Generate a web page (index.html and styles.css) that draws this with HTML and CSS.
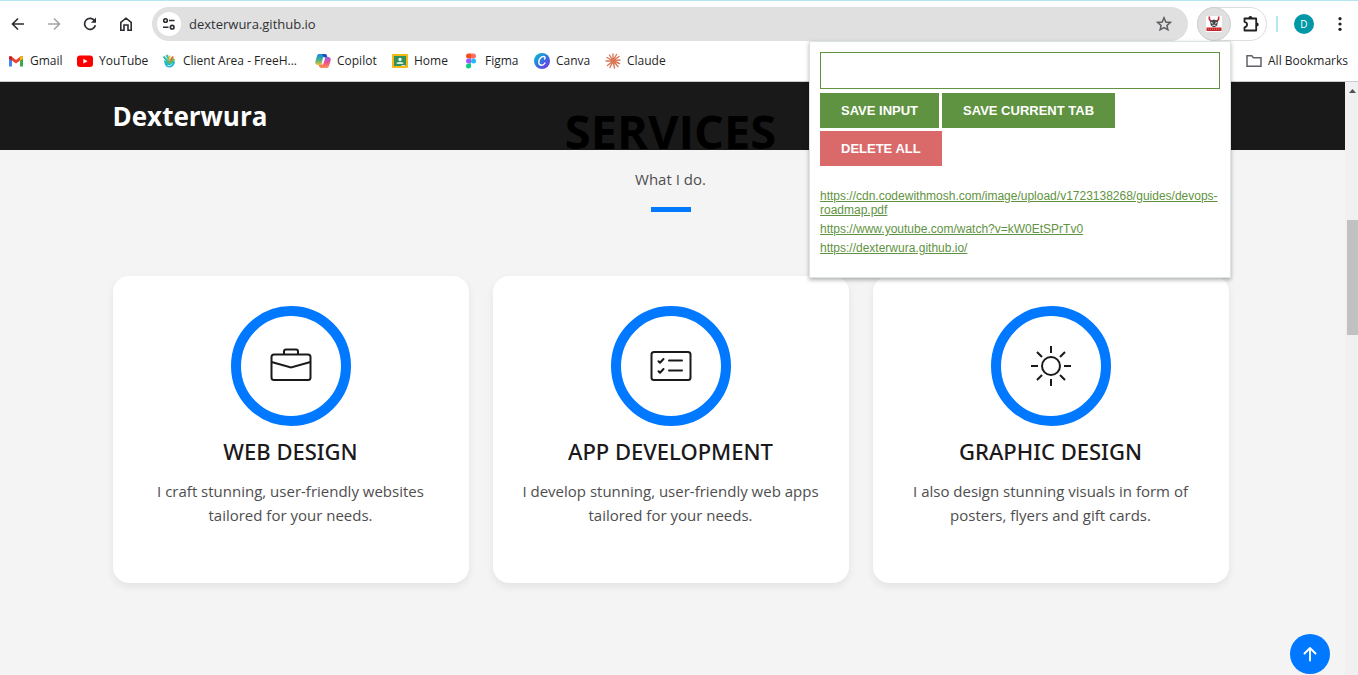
FILE: index.html
```html
<!DOCTYPE html>
<html lang="en">
<head>
<meta charset="utf-8">
<meta name="viewport" content="width=device-width, initial-scale=1">
<title>Dexterwura</title>
<link rel="stylesheet" href="styles.css">
</head>
<body>
<div class="browser">
  <header class="chrome">
    <div class="toolbar">
      <nav class="nav-buttons" aria-label="Navigation">
        <button class="icon-btn" type="button" aria-label="Back"><svg width="16" height="16" viewBox="0 0 16 16" fill="none" stroke="#2a2c30" stroke-width="1.6"><path d="M14 8H3M8 2.5 2.5 8 8 13.5"/></svg></button>
        <button class="icon-btn" type="button" aria-label="Forward"><svg width="16" height="16" viewBox="0 0 16 16" fill="none" stroke="#a5a5a5" stroke-width="1.6"><path d="M2 8h11M8 2.5 13.5 8 8 13.5"/></svg></button>
        <button class="icon-btn" type="button" aria-label="Reload"><svg width="16" height="16" viewBox="0 0 16 16" fill="none" stroke="#2a2c30" stroke-width="1.7"><path d="M12.8 5A5.5 5.5 0 1 0 13.4 9.3"/><path d="M14 1.5v5.2H9z" fill="#2a2c30" stroke="none"/></svg></button>
        <button class="icon-btn" type="button" aria-label="Home"><svg width="16" height="16" viewBox="0 0 16 16" fill="none" stroke="#2a2c30" stroke-width="1.6"><path d="M2.8 14.2V6.3L8 2.2l5.200 4.100v7.900H10V9H6v5.200z"/></svg></button>
      </nav>
      <div class="omnibox">
        <button class="site-info" type="button" aria-label="View site information"><svg width="16" height="16" viewBox="0 0 16 16" fill="none" stroke="#2a2c30" stroke-width="1.6"><circle cx="4.5" cy="4.5" r="1.8"/><path d="M8 4.5h5.5M2 11.2h5.5"/><circle cx="11.2" cy="11.2" r="1.8"/></svg></button>
        <input class="address" type="text" value="dexterwura.github.io" aria-label="Address">
        <button class="star" type="button" aria-label="Bookmark this tab"><svg width="16" height="16" viewBox="0 0 16 16" fill="none" stroke="#5c5f62" stroke-width="1.5"><path d="M8 1.8 9.8 6l4.5.4-3.4 3 1 4.4L8 11.5l-3.9 2.3 1-4.4-3.4-3L6.200 6z"/></svg></button>
      </div>
      <div class="extensions">
        <button class="ext-active" type="button" aria-label="Leads tracker"><svg width="16" height="16" viewBox="0 0 16 16"><path fill="#fff" d="M0 0h16v16H0z"/><path d="M3.500.5c-.8 2.500 0 4 2.500 5M12.500.5c.8 2.500 0 4-2.500 5" fill="none" stroke="#c42d32" stroke-width="1.600"/><path d="M4 5 8 3.500 12 5l-.8 4.500L8 11.500 4.800 9.500z" fill="#45464a"/><path d="m5 6.500 2 .8M11 6.500l-2 .8M6.500 9.300h3" stroke="#eee"/><path d="M.5 11.500h15V15H.5z" fill="#c5262b"/><path d="M2 13.200h12" stroke="#e67979" stroke-dasharray="1 1"/></svg></button>
        <button class="ext-menu" type="button" aria-label="Extensions"><svg width="18" height="18" viewBox="0 0 18 18" fill="none" stroke="#202124" stroke-width="1.800"><path d="M2.500 3.500h11.700v12H2.500v-3.200c3.400-.5 3.400-4.900 0-5.400z" stroke-linejoin="round"/><path d="M6.400 3a2 2 0 0 1 4 0zM14.700 7.500a2 2 0 0 1 0 4z" fill="#202124" stroke="none"/></svg></button>
      </div>
      <span class="divider"></span>
      <button class="avatar" type="button" aria-label="Profile">D</button>
      <button class="icon-btn" type="button" aria-label="Menu"><svg width="16" height="16" viewBox="0 0 16 16" fill="#202124"><circle cx="8" cy="2.700" r="1.600"/><circle cx="8" cy="8" r="1.600"/><circle cx="8" cy="13.300" r="1.600"/></svg></button>
    </div>
    <nav class="bookmarks" aria-label="Bookmarks">
      <a class="bookmark gmail" href="#"><svg width="16" height="16" viewBox="0 0 16 16"><path fill="#4285f4" d="M1 4v9.500h3V7.200z"/><path fill="#34a853" d="M15 4v9.500h-3V7.200z"/><path fill="#ea4335" d="M1 3.500 3 3l5 4 5-4 2 .5v2L8 10.500 1 5.500z"/><path fill="#c5221f" d="M1 4.500 2 3l2 1v3.700L1 5.700z"/><path fill="#fbbc04" d="M15 4.500 14 3l-2 1v3.700l3-2z"/></svg>Gmail</a>
      <a class="bookmark youtube" href="#"><svg width="16" height="16" viewBox="0 0 16 16"><rect y="2.500" width="16" height="11.500" rx="3" fill="#f00"/><path d="m6.300 5.800 4.300 2.400-4.300 2.400z" fill="#fff"/></svg>YouTube</a>
      <a class="bookmark client" href="#"><svg width="16" height="16" viewBox="0 0 16 16"><path d="M3 7c1 1 3 1 4 1l5-2 2 3c-.5 3.500-3 5.500-6 5.500S3 11 3 7z" fill="#22b8d6"/><path d="m2.500 3.500 4.500 5M5.500 2 8.500 7" stroke="#36bfae" stroke-width="2.200"/><path d="M8.500 2.500v5" stroke="#f2c13c" stroke-width="1.800"/><path d="m12 3.500-2.500 4.500" stroke="#e06d36" stroke-width="2"/><path d="m13.500 6-4.500 4-3-2" fill="none" stroke="#76b747" stroke-width="2"/><path d="M6.500 12.500c3 .5 4-.5 4.500-2" fill="none" stroke="#c3edf6"/></svg>Client Area - FreeH...</a>
      <a class="bookmark copilot" href="#"><svg width="16" height="16" viewBox="0 0 16 16"><defs><linearGradient id="ca" x2="0" y2="1"><stop stop-color="#168be5"/><stop offset=".5" stop-color="#3bae91"/><stop offset="1" stop-color="#eec425"/></linearGradient><linearGradient id="cb" x2="0" y2="1"><stop stop-color="#9b5ae8"/><stop offset=".5" stop-color="#ec528d"/><stop offset="1" stop-color="#ff934c"/></linearGradient></defs><path d="M4 1h6c1 0 1.500.7 2 2l.4 1H10L7 11c-.3.700-1 1-2 1H3C.8 12-.2 10.500.4 8.500L2 3c.3-1.200 1-2 2-2z" fill="url(#ca)"/><path d="M7 1h3c1.300 0 1.600 1 2.200 3H9.500C8 4 8 2 7 1z" fill="#174ec0"/><path d="M12 15H6c-1 0-1.500-.7-2-2l-.3-1H6l3-7c.3-.700 1-1 2-1h2c2.200 0 3.200 1.500 2.600 3.500L14 13c-.3 1.200-1 2-2 2z" fill="url(#cb)"/><path d="m8.500 4.500-1.500 6.700h.7L9.700 5z" fill="#fff" stroke="#fff"/></svg>Copilot</a>
      <a class="bookmark home" href="#"><svg width="16" height="16" viewBox="0 0 16 16"><rect y="1" width="16" height="14" rx="1" fill="#f5b916"/><path d="M2 3h12v10H2z" fill="#31915a"/><circle cx="8" cy="6.300" r="1.600" fill="#fff"/><path d="M4.500 11c0-3 7-3 7 0z" fill="#d6eadb"/><path d="M9.500 12h4v1h-4z" fill="#ddd"/></svg>Home</a>
      <a class="bookmark figma" href="#"><svg width="16" height="16" viewBox="0 0 16 16"><path d="M8 .5H5.500a2.500 2.500 0 0 0 0 5H8z" fill="#f24e1e"/><path d="M8 .5h2.500a2.500 2.500 0 0 1 0 5H8z" fill="#ff7262"/><path d="M8 5.500H5.500a2.500 2.500 0 0 0 0 5H8z" fill="#a259ff"/><circle cx="10.500" cy="8" r="2.500" fill="#1abcfe"/><path d="M8 10.500H5.500A2.500 2.500 0 1 0 8 13z" fill="#0acf83"/></svg>Figma</a>
      <a class="bookmark canva" href="#"><svg width="16" height="16" viewBox="0 0 16 16"><defs><linearGradient id="cv" x2="1" y2="1"><stop stop-color="#05c7cf"/><stop offset=".5" stop-color="#3372df"/><stop offset="1" stop-color="#8528e8"/></linearGradient></defs><circle cx="8" cy="8" r="8" fill="url(#cv)"/><path d="M10.500 6c1.200-1.200.5-2.500-1-2.500-2.500 0-4.700 2.700-4.700 5.600C4.800 13 9 13.200 11 10" fill="none" stroke="#fff" stroke-width="1.400" stroke-linecap="round"/></svg>Canva</a>
      <a class="bookmark" href="#"><svg width="16" height="16" viewBox="0 0 16 16" stroke="#d97757" stroke-width="1.400" stroke-linecap="round"><path d="M8 8V1M8 8l3.500-6.500M8 8l6-4.500M8 8l7-1M8 8l6.500 2.500M8 8l5 5.500M8 8l1.500 7M8 8l-3 6.500M8 8l-5.500 4.500M8 8H1M8 8 2 4.500M8 8 4.500 2"/></svg>Claude</a>
      <a class="bookmark all" href="#"><svg width="16" height="16" viewBox="0 0 16 16" fill="none" stroke="#5f6368" stroke-width="1.500"><path d="M1 2.700h4.800l1.600 2H15v8.600H1z"/></svg>All Bookmarks</a>
    </nav>
  </header>

  <section class="popup" aria-label="Leads tracker">
    <input class="lead-input" type="text" aria-label="Lead">
    <div class="popup-actions">
      <button class="action" type="button">SAVE INPUT</button>
      <button class="action" type="button">SAVE CURRENT TAB</button>
      <button class="action danger" type="button">DELETE ALL</button>
    </div>
    <ul class="leads">
      <li><a href="#">https://cdn.codewithmosh.com/image/upload/v1723138268/guides/devops-roadmap.pdf</a></li>
      <li><a href="#">https://www.youtube.com/watch?v=kW0EtSPrTv0</a></li>
      <li><a href="#">https://dexterwura.github.io/</a></li>
    </ul>
  </section>

  <div class="viewport">
    <div class="site">
      <header class="site-header"><div class="container"><a class="brand" href="#">Dexterwura</a></div></header>
      <main class="container services">
        <h1 class="heading">SERVICES</h1>
        <p class="subtitle">What I do.</p>
        <span class="rule"></span>
        <div class="cards">
          <article class="card">
            <div class="ring"><svg width="42" height="42" viewBox="0 0 42 42" fill="none" stroke="#1b191c" stroke-width="2"><rect x="1.500" y="9.500" width="39" height="25.500" rx="2.500"/><path d="M14 9.500v-3a2 2 0 0 1 2-2h10a2 2 0 0 1 2 2v3M1.500 17 21 22.500 40.500 17"/></svg></div>
            <h2 class="card-title">WEB DESIGN</h2>
            <p class="card-text">I craft stunning, user-friendly websites tailored for your needs.</p>
          </article>
          <article class="card">
            <div class="ring"><svg width="42" height="42" viewBox="0 0 42 42" fill="none" stroke="#1b191c" stroke-width="2" stroke-linecap="round" stroke-linejoin="round"><rect x="1.500" y="7" width="39" height="28" rx="2.500"/><path d="M19 15.500h13M19 25.500h13M8.500 16.200l1.500 1.500 3.500-3.700M8.500 26.200l1.500 1.500 3.500-3.700"/></svg></div>
            <h2 class="card-title">APP DEVELOPMENT</h2>
            <p class="card-text">I develop stunning, user-friendly web apps tailored for your needs.</p>
          </article>
          <article class="card">
            <div class="ring"><svg width="42" height="42" viewBox="0 0 42 42" fill="none" stroke="#1b191c" stroke-width="2"><circle cx="21" cy="21" r="9"/><path d="M21 1v7M21 34v7M1 21h7M34 21h7M7 7l5 5M30 30l5 5M7 35l5-5M30 12l5-5"/></svg></div>
            <h2 class="card-title">GRAPHIC DESIGN</h2>
            <p class="card-text">I also design stunning visuals in form of posters, flyers and gift cards.</p>
          </article>
        </div>
      </main>
      <button class="to-top" type="button" aria-label="Back to top"><svg width="16" height="16" viewBox="0 0 16 16" fill="none" stroke="#fff" stroke-width="1.900" stroke-linecap="round" stroke-linejoin="round"><path d="M8 14.500v-12M2.500 7.500 8 2l5.500 5.500"/></svg></button>
    </div>
    <div class="scrollbar"><svg width="7" height="4" viewBox="0 0 7 4"><path d="M0 4 3.500 0 7 4z" fill="#505050"/></svg><span class="thumb"></span></div>
  </div>
</div>
</body>
</html>
```
FILE: styles.css
```css
* { box-sizing: border-box; }

body {
  margin: 0;
  font-family: "Open Sans", "Noto Sans", sans-serif;
  color: #1b191c;
}

button { border: 0; padding: 0; background: none; font: inherit; }
a { color: inherit; text-decoration: none; }
svg { display: block; flex: none; }

.browser {
  position: relative;
  display: flex;
  flex-direction: column;
  min-height: 100vh;
}

/* Browser toolbar */
.chrome {
  height: 82px;
  border-top: 1px solid #b4e7f2;
  border-bottom: 1px solid #c9cccf;
  background: #fff;
}

.toolbar {
  display: flex;
  align-items: center;
  height: 46px;
  padding: 0 10px;
}

.nav-buttons { display: flex; gap: 20px; margin-right: 18px; }
.icon-btn { display: flex; }

.omnibox {
  display: flex;
  flex: 1;
  align-items: center;
  height: 34px;
  margin-right: 9px;
  padding: 0 16px 0 5px;
  border-radius: 17px;
  background: #e0e0e0;
}

.site-info {
  display: grid;
  place-items: center;
  width: 24px;
  height: 24px;
  border-radius: 50%;
  background: #fff;
}

.address {
  flex: 1;
  min-width: 0;
  padding: 0 8px;
  border: 0;
  background: none;
  color: #303236;
  font: 13px "Open Sans", sans-serif;
}

.extensions {
  display: flex;
  align-items: center;
  width: 70px;
  height: 34px;
  border: 1px solid #dedede;
  border-radius: 17px;
}

.ext-active {
  display: grid;
  place-items: center;
  width: 34px;
  height: 34px;
  margin: -1px 11px -1px -1px;
  border: 1px solid #cfcfcf;
  border-radius: 50%;
  background: #e0e0e0;
}

.divider { width: 2px; height: 16px; margin: 0 16px 0 9px; background: #b4e7f2; }

.avatar {
  width: 20px;
  height: 20px;
  margin-right: 18px;
  border-radius: 50%;
  background: #0097a7;
  color: #fff;
  font-size: 10px;
}

.bookmarks {
  display: flex;
  align-items: center;
  height: 27px;
  padding: 0 10px 0 8px;
  color: #1f1f1f;
  font-size: 12px;
}

.bookmark { display: flex; flex: none; align-items: center; gap: 6px; white-space: nowrap; }
.gmail { width: 69px; }
.youtube { width: 84px; }
.client { width: 154px; }
.copilot { width: 77px; }
.home { width: 71px; }
.figma { width: 71px; }
.canva { width: 71px; }
.all { margin-left: auto; }

/* Extension popup */
.popup {
  position: absolute;
  z-index: 3;
  top: 41px;
  right: 127px;
  width: 422px;
  padding: 10px 10px 22px;
  border: 1px solid #dce4e6;
  background: #fff;
  box-shadow: 0 2px 4px rgb(0 0 0 / 30%);
  font-family: "Liberation Sans", Arial, sans-serif;
}

.lead-input {
  display: block;
  width: 100%;
  height: 37px;
  margin-bottom: 4px;
  padding: 10px;
  border: 1px solid #5f9341;
}

.popup-actions { display: flex; flex-wrap: wrap; gap: 3px; }

.action {
  height: 35px;
  padding: 0 21px;
  background: #5f9341;
  color: #fff;
  font-size: 13px;
  font-weight: 700;
}

.danger { background: #da6969; }

.leads {
  display: grid;
  gap: 5px;
  margin: 23px 0 0;
  padding: 0;
  color: #5f9341;
  font-size: 12px;
  line-height: 14px;
  list-style: none;
}

.leads a { text-decoration: underline; }

/* Website */
.viewport { display: flex; flex: 1; }

.site {
  position: relative;
  flex: 1;
  padding-right: 4px;
  background: linear-gradient(#191919 68px, #f4f4f4 68px);
}

.container { width: calc(100% - 48px); max-width: 1116px; margin: 0 auto; }

.site-header {
  display: flex;
  align-items: center;
  height: 68px;
  padding-bottom: 1px;
}

.brand { color: #fff; font-size: 26px; font-weight: 700; }

.services {
  position: relative;
  display: flex;
  flex-direction: column;
  align-items: center;
  padding-bottom: 80px;
}

.heading {
  margin: -49px 0 0;
  color: #000;
  font-size: 47px;
  font-weight: 700;
  line-height: 60px;
}

.subtitle { margin: 6px 0 16px; color: #4e4e4e; font-size: 15px; line-height: 24px; }
.rule { width: 40px; height: 5px; background: #0078ff; }

.cards {
  display: grid;
  grid-template-columns: repeat(auto-fit, minmax(280px, 1fr));
  gap: 24px;
  width: 100%;
  margin-top: 64px;
}

.card {
  display: flex;
  flex-direction: column;
  align-items: center;
  padding: 30px 24px 56px;
  border-radius: 16px;
  background: #fff;
  box-shadow: 0 4px 8px rgb(0 0 0 / 7%);
  text-align: center;
}

.ring {
  display: grid;
  place-items: center;
  width: 120px;
  height: 120px;
  border: 10px solid #0078ff;
  border-radius: 50%;
}

.card-title {
  margin: 11px 0 14px;
  font-family: "Noto Sans", "Open Sans", sans-serif;
  font-size: 22px;
  font-weight: 500;
  line-height: 28px;
}

.card-text { margin: 0; color: #4e4e4e; font-size: 15px; line-height: 24px; }

.to-top {
  position: absolute;
  right: 15px;
  bottom: 1px;
  display: grid;
  place-items: center;
  width: 40px;
  height: 40px;
  border-radius: 50%;
  background: #0078ff;
}

.scrollbar {
  display: flex;
  flex-direction: column;
  align-items: center;
  width: 13px;
  padding: 7px 0 0 2px;
  background: #f0f0f0;
}

.thumb { width: 100%; height: 115px; margin-top: 127px; background: #c1c1c1; }
```
